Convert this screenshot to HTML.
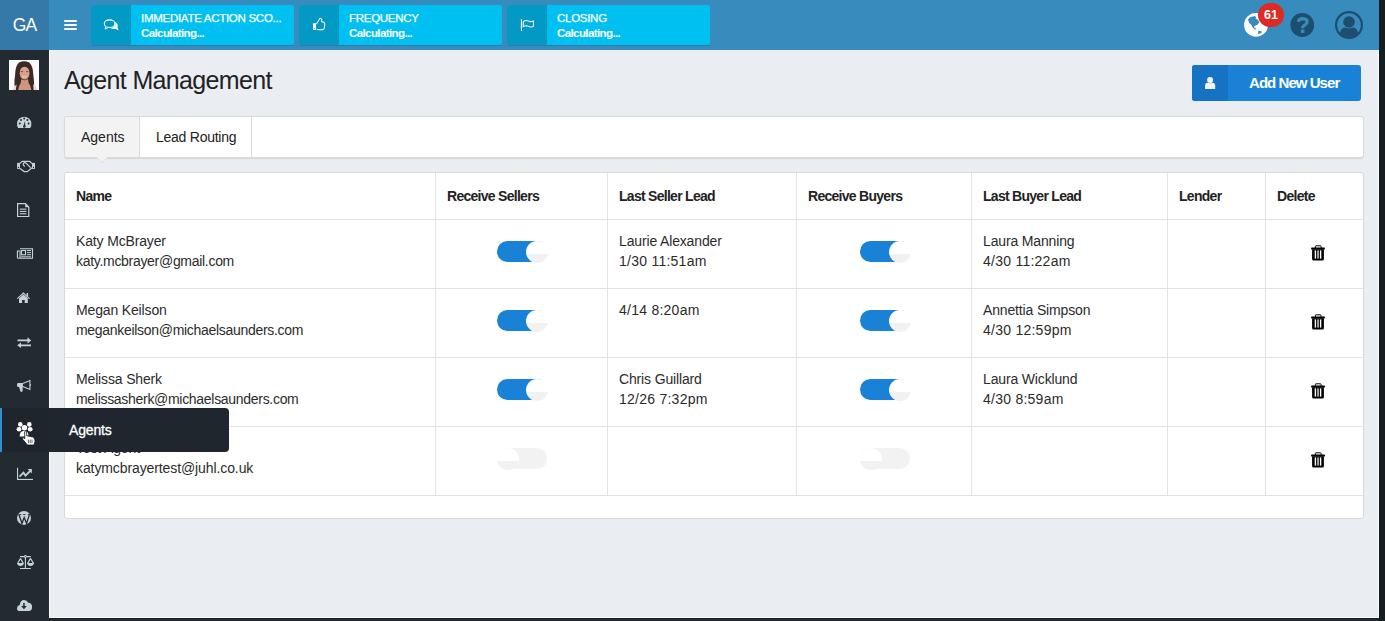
<!DOCTYPE html>
<html><head><meta charset="utf-8">
<style>
*{box-sizing:border-box;margin:0;padding:0}
html,body{width:1385px;height:621px;overflow:hidden;background:#232a31;font-family:"Liberation Sans",sans-serif;color:#2b2b2b}
.abs{position:absolute}
#page{position:absolute;left:0;top:0;width:1379px;height:621px;overflow:hidden}
#content{position:absolute;left:49px;top:50px;width:1330px;height:568px;background:#eaedf2;border-left:1px solid #fff;border-right:1px solid #fff;border-bottom:1px solid #fff;box-shadow:0 1px 0 #1a2126,-1px 0 0 #1a2126}
#rstrip{position:absolute;left:1379px;top:0;width:6px;height:621px;background:#161d21}
#topbar{position:absolute;left:0;top:0;width:1379px;height:50px;background:#388bbd}
#logo{position:absolute;left:0;top:0;width:49px;height:50px;background:#3579a9;color:#fff;font-size:17.5px;text-align:center;line-height:50px;letter-spacing:-0.8px}
#sidebar{position:absolute;left:0;top:50px;width:49px;height:568px;background:#232a31}
.widget{position:absolute;top:5px;width:203px;height:40px;background:#00c0f1;border-radius:2px;overflow:hidden;box-shadow:0 1px 0 rgba(0,0,0,0.12)}
.widget .ic{position:absolute;left:0;top:0;width:40px;height:40px;background:#029ac5}
.widget .t1{position:absolute;-webkit-text-stroke:0.25px #fff;left:50px;top:7px;color:#fff;font-size:11.5px;white-space:nowrap;letter-spacing:-0.28px}
.widget .t2{position:absolute;left:50px;top:22px;color:#fff;font-size:11.5px;font-weight:bold;white-space:nowrap;letter-spacing:-0.6px}
h1{position:absolute;left:64px;top:66px;font-size:25px;letter-spacing:-0.65px;font-weight:normal;color:#222;white-space:nowrap}
#addbtn{position:absolute;left:1192px;top:65px;width:169px;height:36px;background:#1a82d6;border-radius:3px;overflow:hidden}
#addbtn .ic{position:absolute;left:0;top:0;width:36px;height:36px;background:#1673c4}
#addbtn .tx{position:absolute;left:57px;top:9px;color:#fff;font-weight:bold;font-size:15px;white-space:nowrap;letter-spacing:-0.95px}
#tabs{position:absolute;left:64px;top:116px;width:1300px;height:42px;background:#fff;border:1px solid #dadada;border-radius:3px;box-shadow:0 1px 1px rgba(0,0,0,0.1)}
.tab{position:absolute;top:0;height:40px;font-size:14px;color:#222;line-height:40px;white-space:nowrap}
#card{position:absolute;left:64px;top:172px;width:1300px;height:347px;background:#fff;border:1px solid #d9d9d9;border-radius:3px}
.vl{position:absolute;top:0;width:1px;height:323px;background:#e3e3e3}
.hl{position:absolute;left:0;width:1298px;height:1px;background:#e3e3e3}
.th{position:absolute;top:15px;font-size:14px;font-weight:bold;color:#222;white-space:nowrap;letter-spacing:-0.72px}
.td{position:absolute;margin-top:-4px;font-size:14px;line-height:20px;color:#2b2b2b;white-space:nowrap;letter-spacing:-0.2px}
.tog{position:absolute;width:50px;height:21px;border-radius:11px;background:#f2f2f2}
.tog.on{background:#1a82d6}
.knob{position:absolute;top:-0.5px;width:22px;height:22px;border-radius:50%;background:linear-gradient(#fff 0,#fff 60%,#f1f1f1 60%,#f1f1f1 100%)}
.tog.on .knob{left:29px}
.tog.off .knob{left:-0.5px}
.trash{position:absolute;width:15px;height:16px}
#tooltip{position:absolute;z-index:10;left:49px;top:408px;width:180px;height:44px;background:#1f262d;border-radius:0 4px 4px 0}
#tooltip span{position:absolute;left:20px;top:14px;color:#fff;font-size:14px;font-weight:normal;letter-spacing:-0.15px;-webkit-text-stroke:0.3px #fff}
.sico{position:absolute;left:0;width:49px;text-align:center}
</style></head><body>
<div id="page">
<div id="content"></div>
  <div id="topbar">
    <div id="logo">GA</div>
    <div class="abs" style="left:64px;top:19.5px;width:13px;height:2.3px;background:#fff;border-radius:1px"></div>
    <div class="abs" style="left:64px;top:23.8px;width:13px;height:2.3px;background:#fff;border-radius:1px"></div>
    <div class="abs" style="left:64px;top:27.8px;width:13px;height:2.3px;background:#fff;border-radius:1px"></div>
    <div class="widget" style="left:91px"><div class="ic">
      <svg class="abs" style="left:0;top:0" width="40" height="40" viewBox="91 5 40 40"><ellipse cx="109.6" cy="23.7" rx="5.3" ry="3.8" fill="none" stroke="#fff" stroke-width="1.1"/><path d="M106.2 26.6 L105 29 L108.6 27.4" fill="#029ac5" stroke="#fff" stroke-width="1"/><path d="M114.4 21.8 Q118.6 23.6 117.6 27.4 L118.6 30.6 L115.2 28.8 Q112.6 29.2 110.8 28.2 Q114.8 27.4 115.4 24.6 Q115.4 23 114.4 21.8Z" fill="#fff"/></svg>
    </div><div class="t1">IMMEDIATE ACTION SCO...</div><div class="t2">Calculating...</div></div>
    <div class="widget" style="left:299px"><div class="ic">
      <svg class="abs" style="left:0;top:0" width="40" height="40" viewBox="299 5 40 40"><path d="M313 23.2 H316 V30 H313Z" fill="#fff"/><circle cx="314.5" cy="28.3" r="0.55" fill="#029ac5"/><path d="M316.4 24 L319.4 19.2 Q320.2 17.8 321.2 18.6 Q322.2 19.6 321.6 21.6 L324 22.4 Q324.9 22.9 324.7 24.2 L324.4 27.6 Q324 29.6 322.6 29.6 H318.2 Q317 29.6 316.4 29" fill="none" stroke="#fff" stroke-width="1.05"/></svg>
    </div><div class="t1">FREQUENCY</div><div class="t2">Calculating...</div></div>
    <div class="widget" style="left:507px"><div class="ic">
      <svg class="abs" style="left:0;top:0" width="40" height="40" viewBox="507 5 40 40"><rect x="520.9" y="19.2" width="1.1" height="11.8" fill="#fff"/><path d="M523.3 21.6 Q525.8 19.6 528.6 21.1 Q531 22.2 533.5 21.1 V26.4 Q531 27.6 528.6 26.4 Q525.8 25 523.3 26.6 Z" fill="none" stroke="#fff" stroke-width="1.05"/></svg>
    </div><div class="t1">CLOSING</div><div class="t2">Calculating...</div></div>
    <svg class="abs" style="left:1243px;top:12px" width="26" height="26" viewBox="1243 12 26 26"><circle cx="1256" cy="24.9" r="11.9" fill="#fff"/><path d="M1248 19.4 L1250.1 17.2 L1254.5 16 L1256.4 17.2 L1255.5 18.5 L1257.9 19.7 L1259.3 22.1 L1257.9 24.5 L1254.5 25.9 L1254 27.4 L1256.4 28.8 L1255.9 29.8 L1253 27.9 L1251.1 24.5 L1249.2 23 Z M1258.4 30.8 L1261.3 31.3 L1262.2 32.2 L1259.3 33.7 L1257.9 34.2Z" fill="#388bbd"/></svg>
    <div class="abs" style="left:1258px;top:3px;width:26px;height:24px;border-radius:12px;background:#dd2a23;color:#fff;font-weight:bold;font-size:12.5px;line-height:24px;text-align:center">61</div>
    <svg class="abs" style="left:1290px;top:13px" width="24" height="24" viewBox="1290 13 24 24"><circle cx="1302.3" cy="25" r="11.9" fill="#1d4e6e"/><path d="M1298.4 21.8 Q1298.6 18.6 1302.8 18.6 Q1307.2 18.8 1307.2 21.8 Q1307.2 23.6 1305 24.8 Q1302.6 26 1302.6 28.2" fill="none" stroke="#388bbd" stroke-width="3.1"/><rect x="1300.9" y="29.6" width="3.5" height="3.3" fill="#388bbd"/></svg>
    <svg class="abs" style="left:1335px;top:11px" width="28" height="28" viewBox="0 0 28 28"><circle cx="14" cy="14" r="12.9" fill="none" stroke="#1d4e6e" stroke-width="2.2"/><circle cx="14" cy="11" r="5.8" fill="#1d4e6e"/><path d="M5 22.5 Q5.5 17 10 16.6 Q14 18.4 18 16.6 Q22.5 17 23 22.5 Q19 26 14 26 Q9 26 5 22.5Z" fill="#1d4e6e"/></svg>
  </div>
  <div id="sidebar"></div>
  <div class="abs" style="left:0;top:408px;width:49px;height:44px;background:#1f252c"></div>
  <div class="abs" style="left:0;top:408px;width:2px;height:44px;background:#2f8fd0"></div>
  <div id="tooltip"><span>Agents</span></div>
  <svg class="abs" style="left:0;top:0" width="49" height="618" viewBox="0 0 49 618">
    <!-- avatar -->
    <rect x="9" y="60" width="30" height="30" fill="#fbfbfb"/>
    <path d="M15.5 90 Q13.6 84 15 76 Q15.2 66 19 62.6 Q24 59.8 29.2 62.4 Q33 65.6 33.2 74 Q34.6 84 34 90Z" fill="#3b2a24"/>
    <path d="M12.5 90 Q14 86 16.6 84.6 L15.8 90Z M33.2 84.2 Q36 86 37.5 90 H33.6Z" fill="#e6dcd8"/>
    <ellipse cx="24.6" cy="73" rx="4.9" ry="6.6" fill="#d7a18a"/>
    <path d="M19.6 69.6 Q20.4 64.6 24.8 64.4 Q29.4 64.8 29.8 70 Q27.6 66.8 24.6 66.6 Q21.4 66.8 19.6 69.6Z" fill="#3b2a24"/>
    <path d="M21.2 79.2 Q24.6 81.4 28 79 L28.6 83 Q31 86 31.4 90 H18.2 Q18.4 86 20.8 83Z" fill="#cf9580"/>
    <path d="M22.4 76.2 Q24.6 77.6 26.8 76.2" fill="none" stroke="#f0d8d0" stroke-width="0.9"/>
    <path d="M21 71.6 H23 M26.2 71.6 H28.2" stroke="#5a3a30" stroke-width="0.8"/>
    <!-- gauge -->
    <path d="M18.2 128 A7.2 7.2 0 1 1 30.2 128 Z" fill="#c6d2da"/>
    <g fill="#232a31"><circle cx="19.8" cy="123.6" r="1"/><circle cx="21" cy="120" r="1"/><circle cx="24.2" cy="118.6" r="1"/><circle cx="27.4" cy="120" r="1"/><circle cx="28.6" cy="123.6" r="1"/><path d="M23.2 127 L24.9 121 L25.4 127Z"/><circle cx="24.3" cy="126.6" r="1.2"/></g>
    <!-- handshake -->
    <rect x="17.1" y="162.9" width="2.9" height="6" fill="#c6d2da"/><rect x="32" y="162.9" width="3" height="6" fill="#c6d2da"/>
    <circle cx="18.5" cy="167.4" r="0.6" fill="#232a31"/><circle cx="33.5" cy="167.4" r="0.6" fill="#232a31"/>
    <g fill="none" stroke="#c6d2da" stroke-width="1.2">
      <path d="M20 163.2 L22.2 161.4 H29.8 L32 163.6"/>
      <path d="M20 168.4 L24.2 171.6 H27.2 L32 167.8"/>
      <path d="M24.8 166.4 Q22.4 165 23.6 163.2 Q25 162 26.8 163.8 L30.6 167.6"/>
    </g>
    <!-- doc -->
    <path d="M17.6 203.6 H25.4 L28.8 207 V216.5 H17.6Z" fill="none" stroke="#c6d2da" stroke-width="1.2"/>
    <path d="M25.2 203.4 L29 207.2 H25.2Z" fill="#c6d2da"/>
    <g fill="#c6d2da"><rect x="19.8" y="208.6" width="6.6" height="1.1"/><rect x="19.8" y="210.9" width="6.6" height="1.1"/><rect x="19.8" y="213.2" width="6.6" height="1.1"/></g>
    <!-- newspaper -->
    <path d="M20 248.7 H32.5 V258.3 H18.2 Q17.4 258.3 17.4 257.5 V251 H20 V258" fill="none" stroke="#c6d2da" stroke-width="1.1"/>
    <rect x="21.5" y="250.5" width="4" height="4.3" fill="none" stroke="#c6d2da" stroke-width="1.1"/>
    <g fill="#c6d2da"><rect x="26.9" y="250" width="4.1" height="1"/><rect x="26.9" y="252.1" width="4.1" height="1"/><rect x="26.9" y="254.2" width="4.1" height="1"/><rect x="21" y="256.3" width="10" height="1"/></g>
    <!-- home -->
    <path d="M17.3 298.6 L23.4 293.1 L29.5 298.6" fill="none" stroke="#c6d2da" stroke-width="1.1"/>
    <path d="M19 298.2 L23.4 294.5 L27.8 298.2 V303 H24.7 V300 H22.1 V303 H19Z" fill="#c6d2da"/>
    <rect x="26.6" y="293" width="1.5" height="3.2" fill="#c6d2da"/>
    <!-- arrows -->
    <g fill="#c6d2da"><path d="M17.5 339.6 H27.5 V337.2 L31.2 340.4 L27.5 343.6 V341.2 H17.5Z"/><path d="M31 344.6 H21 V342.4 L17.2 345.2 L21 348 V346.2 H31Z"/></g>
    <!-- megaphone -->
    <path d="M17.1 384.3 Q17.1 383.1 18.3 383.1 H22.9 V386.9 H18.3 Q17.1 386.9 17.1 385.7Z" fill="#c6d2da"/>
    <path d="M18.9 386.6 H22.7 L22.6 391.2 Q22 392 20.6 391.8 Z" fill="#c6d2da"/>
    <path d="M22.8 383.5 L29.9 380.5 V389.5 L22.8 386.5" fill="none" stroke="#c6d2da" stroke-width="1.1"/>
    <rect x="30" y="384.2" width="1" height="1.5" fill="#c6d2da"/>
    <!-- agents group (white) -->
    <g fill="#fff">
      <circle cx="20.3" cy="424.4" r="2.3"/><circle cx="29.3" cy="424.4" r="2.3"/>
      <circle cx="24.5" cy="427.8" r="2.7"/>
      <ellipse cx="19" cy="429.2" rx="2.4" ry="2.2"/><ellipse cx="30.2" cy="429.2" rx="2.4" ry="2.2"/>
      <path d="M19.8 436.4 Q19.4 431 24.4 430.8 Q28.8 431 28.4 436.4Z"/>
    </g>
    <path d="M24.6 431.6 Q25.6 430.6 26.6 431.6 L26.8 436 Q28.2 435.4 29 436.4 Q30.4 435.8 31.2 436.8 Q32.6 436.4 33.6 437.6 Q35.2 439 35 441.6 L34 445 H27.4 L22.8 439.4 Q22.2 438 23.6 437.6 L24.8 438.6Z" fill="#fff" stroke="#0d1114" stroke-width="0.8"/>
    <g stroke="#222" stroke-width="0.7"><path d="M28.4 439.6V443.2M30.2 439.6V443.2M32 439.6V443.2"/></g>
    <!-- chart -->
    <rect x="17" y="467.8" width="1.1" height="12" fill="#c6d2da"/><rect x="17" y="478.9" width="16" height="1.1" fill="#c6d2da"/>
    <path d="M19.5 476.7 L23.5 472.7 L25.5 475.6 L30.2 471" fill="none" stroke="#c6d2da" stroke-width="1.8"/>
    <path d="M27.6 469.1 H31.9 V473.4Z" fill="#c6d2da"/>
    <!-- wordpress -->
    <circle cx="24" cy="517.9" r="7" fill="#c6d2da"/>
    <path d="M19 514.8 L22 523.4 L24.2 517.6 L26.6 523.4 L29.4 514.6" fill="none" stroke="#1f252b" stroke-width="1.3"/>
    <path d="M18.2 514.6 H21.4 M23 514.6 H25.6 M27.8 514.4 H30" stroke="#1f252b" stroke-width="0.8"/>
    <!-- scales -->
    <g fill="none" stroke="#c6d2da" stroke-width="1.1">
      <path d="M25.4 556.5 V568 M20 568.5 H30.8 M20 556.6 H30.8"/>
      <path d="M20.4 558.4 L17.6 563.4 M20.4 558.4 L23.3 563.4 M30.5 558.4 L27.6 563.4 M30.5 558.4 L33.5 563.4"/>
    </g>
    <circle cx="25.4" cy="556.4" r="1.4" fill="#c6d2da"/><circle cx="25.4" cy="556.4" r="0.5" fill="#232a31"/>
    <path d="M17 563.1 H23.9 Q23.4 566.1 20.45 566.1 Q17.5 566.1 17 563.1Z M27.1 563.1 H34 Q33.5 566.1 30.55 566.1 Q27.6 566.1 27.1 563.1Z" fill="#c6d2da"/>
    <!-- cloud -->
    <path d="M19.6 611 Q16.9 611 17 608.2 Q17.2 605.4 19.7 605.1 Q20.4 600 24 600 Q27.2 600.1 28.2 602.7 Q32.1 602.9 32.1 607 Q32 611 28.8 611Z" fill="#c6d2da"/>
    <path d="M23.2 603 H24.7 V606 H26.8 L23.95 609.3 L21.1 606 H23.2Z" fill="#232a31"/>
  </svg>
  <h1>Agent Management</h1>
  <div id="addbtn"><div class="ic"><svg class="abs" style="left:11px;top:11px" width="14" height="14" viewBox="1203 76 14 14"><circle cx="1210.1" cy="79.9" r="3" fill="#eef4fb"/><path d="M1205 88.4 V85.8 Q1205 82.9 1207.7 82.8 Q1210.1 83.7 1212.5 82.8 Q1215.2 82.9 1215.2 85.8 V88.4 Q1215.2 88.9 1214.7 88.9 H1205.5 Q1205 88.9 1205 88.4Z" fill="#eef4fb"/></svg></div><div class="tx">Add New User</div></div>
  <div id="tabs">
    <div class="tab" style="left:0;width:75px;background:#f3f3f3;border-radius:3px 0 0 3px;border-right:1px solid #dadada;padding-left:16px">Agents</div>
    <div class="tab" style="left:75px;width:112px;border-right:1px solid #dadada;padding-left:16px;letter-spacing:-0.25px">Lead Routing</div>
  </div>
  <svg class="abs" style="left:95px;top:156px" width="14" height="8" viewBox="0 0 14 8"><path d="M0 0.5 L7 7 L14 0.5 Z" fill="#f3f3f3"/><path d="M1 1 L7 6.6 L13 1" fill="none" stroke="#d4d7db" stroke-width="0.8"/></svg>
  <div id="card">
<div class="vl" style="left:370px"></div>
<div class="vl" style="left:542px"></div>
<div class="vl" style="left:731px"></div>
<div class="vl" style="left:906px"></div>
<div class="vl" style="left:1102px"></div>
<div class="vl" style="left:1200px"></div>
<div class="hl" style="top:46px"></div>
<div class="hl" style="top:115px"></div>
<div class="hl" style="top:184px"></div>
<div class="hl" style="top:253px"></div>
<div class="hl" style="top:322px"></div>
<div class="th" style="left:11px">Name</div>
<div class="th" style="left:382px">Receive Sellers</div>
<div class="th" style="left:554px">Last Seller Lead</div>
<div class="th" style="left:743px">Receive Buyers</div>
<div class="th" style="left:918px">Last Buyer Lead</div>
<div class="th" style="left:1114px">Lender</div>
<div class="th" style="left:1212px">Delete</div>
<div class="td" style="left:11px;top:62px"><span style="letter-spacing:-0.15px">Katy McBrayer</span><br><span style="letter-spacing:-0.3px">katy.mcbrayer@gmail.com</span></div>
<div class="tog on" style="left:432px;top:68px"><div class="knob"></div></div>
<div class="tog on" style="left:795px;top:68px"><div class="knob"></div></div>
<div class="td" style="left:554px;top:62px"><span style="letter-spacing:-0.15px">Laurie Alexander</span><br><span style="letter-spacing:0.25px">1/30 11:51am</span></div>
<div class="td" style="left:918px;top:62px"><span style="letter-spacing:-0.15px">Laura Manning</span><br><span style="letter-spacing:0.25px">4/30 11:22am</span></div>
<svg class="trash" style="left:1246px;top:71.5px" viewBox="0 0 15 16"><path d="M4.4 3 V1.4 Q4.4 0.8 5 0.8 H9.5 Q10.1 0.8 10.1 1.4 V3" fill="none" stroke="#000" stroke-width="1"/><rect x="0.1" y="2.5" width="13.8" height="1.9" rx="0.5" fill="#000"/><path d="M1.1 4.3 H12.9 V13.9 Q12.9 15.4 11.4 15.4 H2.6 Q1.1 15.4 1.1 13.9Z" fill="#000"/><rect x="3.7" y="5.4" width="1.4" height="8.2" fill="#fff"/><rect x="6.2" y="5.4" width="1.7" height="8.2" fill="#b5b5b5"/><rect x="8.9" y="5.4" width="1.4" height="8.2" fill="#fff"/></svg>
<div class="td" style="left:11px;top:131px"><span style="letter-spacing:-0.15px">Megan Keilson</span><br><span style="letter-spacing:-0.3px">megankeilson@michaelsaunders.com</span></div>
<div class="tog on" style="left:432px;top:137px"><div class="knob"></div></div>
<div class="tog on" style="left:795px;top:137px"><div class="knob"></div></div>
<div class="td" style="left:554px;top:131px"><span style="letter-spacing:0.25px">4/14 8:20am</span></div>
<div class="td" style="left:918px;top:131px"><span style="letter-spacing:-0.15px">Annettia Simpson</span><br><span style="letter-spacing:0.25px">4/30 12:59pm</span></div>
<svg class="trash" style="left:1246px;top:140.5px" viewBox="0 0 15 16"><path d="M4.4 3 V1.4 Q4.4 0.8 5 0.8 H9.5 Q10.1 0.8 10.1 1.4 V3" fill="none" stroke="#000" stroke-width="1"/><rect x="0.1" y="2.5" width="13.8" height="1.9" rx="0.5" fill="#000"/><path d="M1.1 4.3 H12.9 V13.9 Q12.9 15.4 11.4 15.4 H2.6 Q1.1 15.4 1.1 13.9Z" fill="#000"/><rect x="3.7" y="5.4" width="1.4" height="8.2" fill="#fff"/><rect x="6.2" y="5.4" width="1.7" height="8.2" fill="#b5b5b5"/><rect x="8.9" y="5.4" width="1.4" height="8.2" fill="#fff"/></svg>
<div class="td" style="left:11px;top:200px"><span style="letter-spacing:-0.15px">Melissa Sherk</span><br><span style="letter-spacing:-0.3px">melissasherk@michaelsaunders.com</span></div>
<div class="tog on" style="left:432px;top:206px"><div class="knob"></div></div>
<div class="tog on" style="left:795px;top:206px"><div class="knob"></div></div>
<div class="td" style="left:554px;top:200px"><span style="letter-spacing:-0.15px">Chris Guillard</span><br><span style="letter-spacing:0.25px">12/26 7:32pm</span></div>
<div class="td" style="left:918px;top:200px"><span style="letter-spacing:-0.15px">Laura Wicklund</span><br><span style="letter-spacing:0.25px">4/30 8:59am</span></div>
<svg class="trash" style="left:1246px;top:209.5px" viewBox="0 0 15 16"><path d="M4.4 3 V1.4 Q4.4 0.8 5 0.8 H9.5 Q10.1 0.8 10.1 1.4 V3" fill="none" stroke="#000" stroke-width="1"/><rect x="0.1" y="2.5" width="13.8" height="1.9" rx="0.5" fill="#000"/><path d="M1.1 4.3 H12.9 V13.9 Q12.9 15.4 11.4 15.4 H2.6 Q1.1 15.4 1.1 13.9Z" fill="#000"/><rect x="3.7" y="5.4" width="1.4" height="8.2" fill="#fff"/><rect x="6.2" y="5.4" width="1.7" height="8.2" fill="#b5b5b5"/><rect x="8.9" y="5.4" width="1.4" height="8.2" fill="#fff"/></svg>
<div class="td" style="left:11px;top:269px"><span style="letter-spacing:-0.15px">Test Agent</span><br><span style="letter-spacing:-0.1px">katymcbrayertest@juhl.co.uk</span></div>
<div class="tog off" style="left:432px;top:275px"><div class="knob"></div></div>
<div class="tog off" style="left:795px;top:275px"><div class="knob"></div></div>
<svg class="trash" style="left:1246px;top:278.5px" viewBox="0 0 15 16"><path d="M4.4 3 V1.4 Q4.4 0.8 5 0.8 H9.5 Q10.1 0.8 10.1 1.4 V3" fill="none" stroke="#000" stroke-width="1"/><rect x="0.1" y="2.5" width="13.8" height="1.9" rx="0.5" fill="#000"/><path d="M1.1 4.3 H12.9 V13.9 Q12.9 15.4 11.4 15.4 H2.6 Q1.1 15.4 1.1 13.9Z" fill="#000"/><rect x="3.7" y="5.4" width="1.4" height="8.2" fill="#fff"/><rect x="6.2" y="5.4" width="1.7" height="8.2" fill="#b5b5b5"/><rect x="8.9" y="5.4" width="1.4" height="8.2" fill="#fff"/></svg>
</div>
</div>
<div id="rstrip"></div>
</body></html>
